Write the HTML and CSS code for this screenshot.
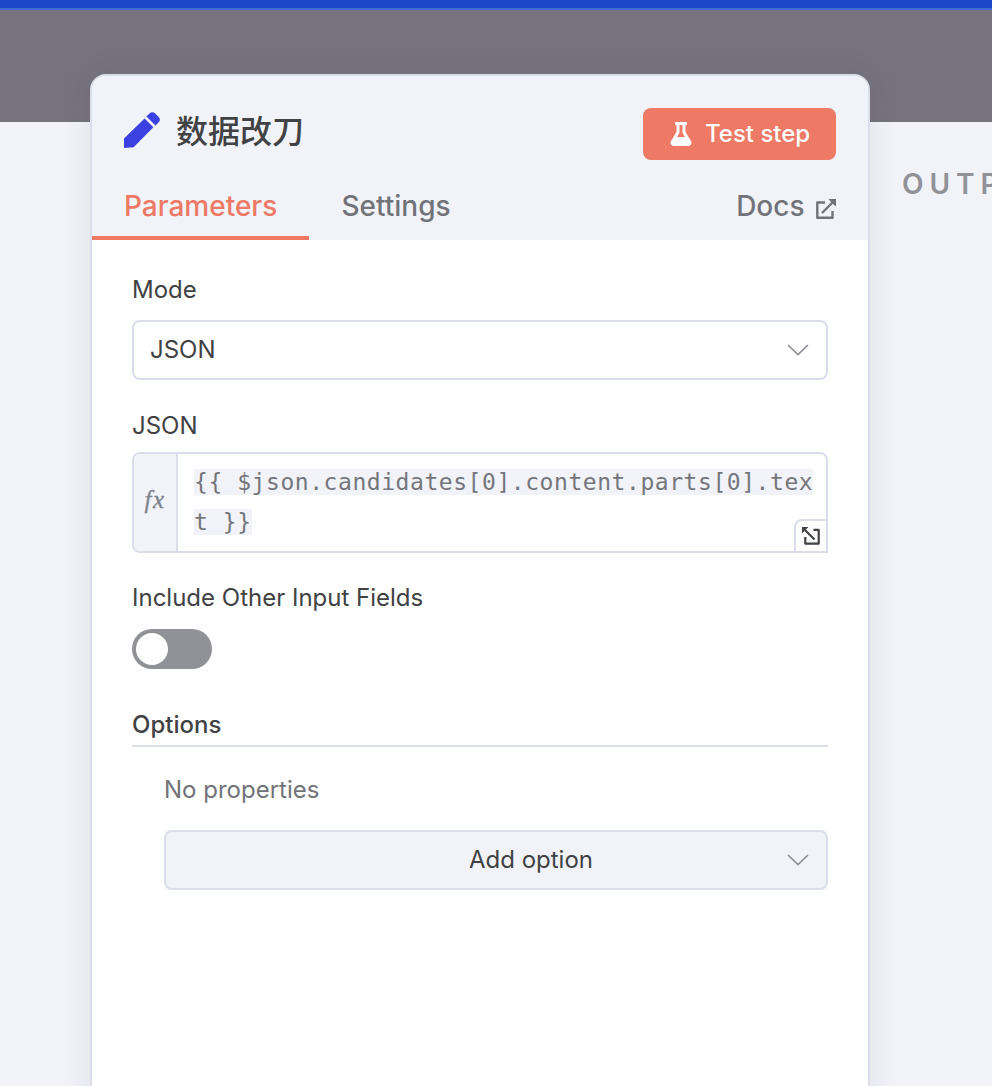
FILE: index.html
```html
<!DOCTYPE html>
<html lang="zh">
<head>
<meta charset="utf-8">
<title>数据改刀</title>
<link rel="stylesheet" href="styles.css">
</head>
<body>
<div class="backdrop"></div>
<main class="view">
  <section class="panel">
    <header class="panel-header">
      <div class="title-row">
        <svg class="pen" viewBox="0 0 36 36"><path d="M0 36V26.5L20.6 6.500 29.400 15.300 9.6 35.2Z"/><path d="M22.4 4.5 25.5 1.5Q28.3-1.2 31.2 1.5L34.5 4.8Q37.3 7.7 34.5 10.6L31.5 13.5Z"/></svg>
        <h1 class="title">数据改刀</h1>
        <button class="test"><svg class="flask" viewBox="0 0 448 512"><path d="M437.2 403.500 320 215V64h8c13.300 0 24-10.700 24-24V24c0-13.300-10.700-24-24-24H120c-13.300 0-24 10.700-24 24v16c0 13.300 10.700 24 24 24h8v151L10.800 403.500C-18.500 450.600 15.300 512 70.900 512h306.200c55.700 0 89.400-61.500 60.100-108.500zM137.900 320l48.200-77.600c3.700-5.200 5.800-11.600 5.800-18.400V64h64v160c0 6.900 2.200 13.200 5.800 18.400l48.200 77.600h-172z"/></svg><span class="test-label">Test step</span></button>
      </div>
      <nav class="tabs">
        <a class="tab active"><span class="parameters">Parameters</span></a>
        <a class="tab settings">Settings</a>
        <a class="tab docs"><span class="docs-label">Docs</span><svg class="external" viewBox="0 0 20 20"><path d="M9 3.500H1.300V18.700H16.500V12M6 14 17 3" fill="none" stroke="currentColor" stroke-width="2.400" stroke-linejoin="round"/><path d="M12.500 0H20V7.500L17.500 5.500 14.500 2.500Z" fill="currentColor"/></svg></a>
      </nav>
    </header>
    <div class="form">
      <div class="label">Mode</div>
      <div class="select"><span class="select-value">JSON</span><svg class="chevron" viewBox="0 0 22 12"><path d="M1 1 11 10.500 21 1"/></svg></div>
      <div class="label label-json">JSON</div>
      <div class="expression">
        <div class="fx">fx</div>
        <div class="code"><span class="resolvable">{{ $json.candidates[0].content.parts[0].tex<br>t }}</span></div>
        <div class="expand"><svg viewBox="0 0 18 18"><path d="M11.500 2.800H16.700V16.700H3.300V10M3 3 12.500 12.500" fill="none" stroke="currentColor" stroke-width="2.200" stroke-linejoin="round"/><path d="M0 0H6.500L0 6.500Z" fill="currentColor"/></svg></div>
      </div>
      <div class="label label-include"><span class="include">Include Other Input Fields</span></div>
      <div class="switch"><div class="knob"></div></div>
      <div class="options"><span class="options-label">Options</span></div>
      <div class="collection">
        <div class="empty"><span class="no-props">No properties</span></div>
        <div class="select add"><span class="select-value">Add option</span><svg class="chevron" viewBox="0 0 22 12"><path d="M1 1 11 10.500 21 1"/></svg></div>
      </div>
    </div>
  </section>
  <aside class="output">OUTPUT</aside>
</main>
</body>
</html>
```
FILE: styles.css
```css
* { box-sizing: border-box; }
body {
  margin: 0;
  height: 1086px;
  overflow: hidden;
  position: relative;
  background: #f1f3f9;
  color: #414244;
  font-family: Inter, "Noto Sans CJK SC", sans-serif;
  font-size: 24px;
}
.backdrop {
  position: absolute;
  inset: 0 0 auto;
  height: 122px;
  background: #76737e;
  border-top: 8px solid #1b47c8;
}
.backdrop::before { content: ""; display: block; height: 2px; background: #416bd0; }
.view {
  position: relative;
  display: flex;
  height: 1086px;
  padding: 74px 0 0 90px;
  overflow: hidden;
}
.panel {
  flex: 0 0 780px;
  height: 1060px;
  border: 2px solid #dadeea;
  border-radius: 16px;
  overflow: hidden;
  background: #fff;
  box-shadow: 0 0 32px rgba(60, 60, 70, .09);
}
.panel-header { height: 164px; background: #f1f3f9; }
.title-row { display: flex; align-items: center; height: 100px; padding: 16px 32px 0; }
.pen { width: 36px; height: 36px; margin-top: -8px; fill: #3b40e0; overflow: visible; }
.title {
  margin: -10px 0 0 16px;
  font: 500 32px/40px "Noto Sans CJK SC", sans-serif;
}
.test {
  display: flex;
  align-items: center;
  width: 193px;
  height: 52px;
  margin-left: auto;
  padding: 0 0 0 27px;
  border: 0;
  border-radius: 8px;
  background: #ee7965;
  color: #fff;
  font: 500 24px/52px Inter, sans-serif;
}
.flask { width: 22px; height: 24px; margin-right: 13px; fill: #fff; }
.tabs { display: flex; height: 64px; font-size: 28px; font-weight: 500; line-height: 61px; color: #717379; }
.tab.active { width: 217px; padding-left: 32px; color: #ee7965; border-bottom: 4px solid #ee7965; }
.settings { margin-left: 32.5px; }
.docs { display: flex; align-items: center; height: 61px; margin-left: auto; padding-right: 32px; }
.external { width: 20px; height: 20px; margin: 5px 0 0 11.5px; }
.form { padding: 34px 40px 0; }
.label { height: 32px; line-height: 32px; }
.select {
  display: flex;
  align-items: center;
  height: 60px;
  margin-top: 14px;
  padding: 0 17px 0 16px;
  border: 2px solid #dadeea;
  border-radius: 8px;
}
.select-value { padding-bottom: 2px; }
.chevron { width: 22px; height: 12px; margin-left: auto; fill: none; stroke: #8d8f96; stroke-width: 1.7; }
.label-json { margin-top: 30px; }
.expression {
  position: relative;
  display: flex;
  height: 101px;
  margin-top: 10px;
  border: 2px solid #dadeea;
  border-radius: 8px 8px 0 8px;
  overflow: hidden;
}
.fx {
  flex: 0 0 44px;
  border-right: 2px solid #dadeea;
  background: #f1f3f9;
  color: #7d838c;
  font: italic 25px/91px "Liberation Serif", serif;
  letter-spacing: 1.5px;
  -webkit-text-stroke: .3px currentColor;
  text-align: center;
}
.code {
  padding: 8px 0 0 16px;
  font: 23px/40px "DejaVu Sans Mono", monospace;
  letter-spacing: .553px;
  color: #75767b;
  white-space: nowrap;
}
.resolvable { background: #f1f3f9; }
.expand {
  position: absolute;
  right: 0;
  bottom: 0;
  display: flex;
  width: 32px;
  height: 32px;
  padding: 6px;
  border: 2px solid #dadeea;
  border-width: 2px 0 0 2px;
  border-radius: 8px 0 0 0;
  background: #fff;
}
.expand svg { width: 18px; height: 18px; }
.label-include { margin-top: 29px; }
.switch { width: 80px; height: 40px; margin-top: 15px; padding: 4px; border-radius: 20px; background: #909298; }
.knob { width: 32px; height: 32px; border-radius: 50%; background: #fff; }
.options { height: 40px; margin-top: 38px; border-bottom: 2px solid #dadeea; line-height: 36px; font-weight: 500; }
.collection { padding-left: 32px; }
.empty { height: 32px; margin-top: 27px; line-height: 32px; color: #717379; }
.add { margin-top: 24px; padding-left: 109px; background: #f1f3f9; }
.add .select-value { flex: 1; text-align: center; }
.add .chevron { margin-left: 0; }
.output { margin: 92px 0 0 32px; font-size: 28px; font-weight: 600; line-height: 36px; letter-spacing: 6px; color: #909298; }
```
